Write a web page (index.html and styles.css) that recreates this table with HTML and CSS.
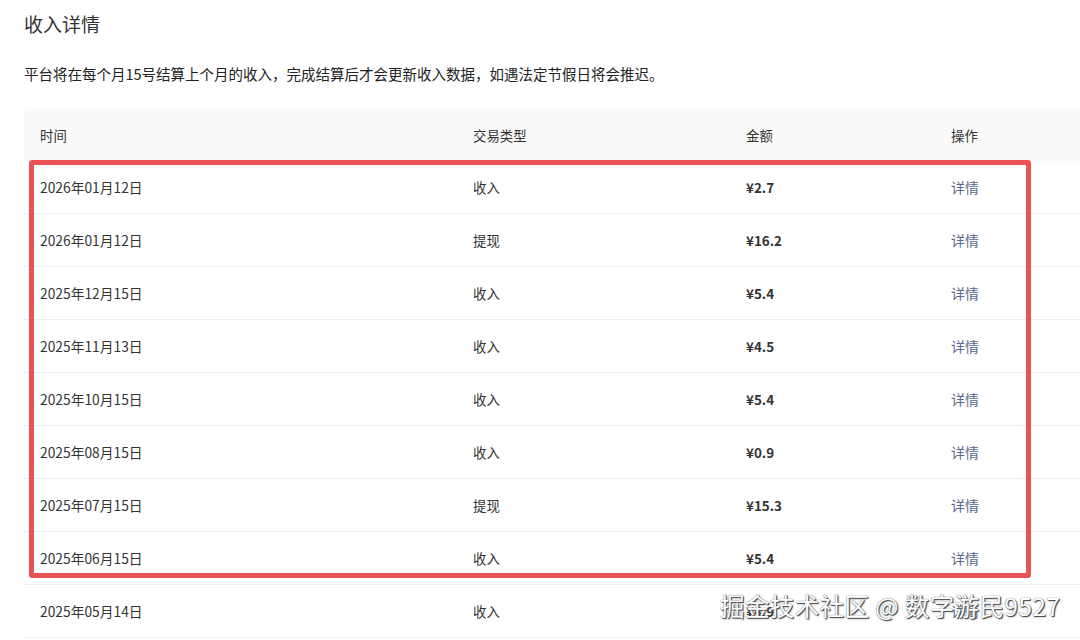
FILE: index.html
```html
<!DOCTYPE html>
<html lang="zh-CN">
<head>
<meta charset="utf-8">
<title>收入详情</title>
<link rel="stylesheet" href="styles.css">
</head>
<body>
<div class="page">
  <h1 class="title">收入详情</h1>
  <p class="desc">平台将在每个月15号结算上个月的收入，完成结算后才会更新收入数据，如遇法定节假日将会推迟。</p>
  <div class="table">
    <div class="row head">
      <div class="cell">时间</div>
      <div class="cell">交易类型</div>
      <div class="cell">金额</div>
      <div class="cell">操作</div>
    </div>
    <div class="row"><div class="cell">2026年01月12日</div><div class="cell">收入</div><div class="cell amount">¥2.7</div><div class="cell link">详情</div></div>
    <div class="row"><div class="cell">2026年01月12日</div><div class="cell">提现</div><div class="cell amount">¥16.2</div><div class="cell link">详情</div></div>
    <div class="row"><div class="cell">2025年12月15日</div><div class="cell">收入</div><div class="cell amount">¥5.4</div><div class="cell link">详情</div></div>
    <div class="row"><div class="cell">2025年11月13日</div><div class="cell">收入</div><div class="cell amount">¥4.5</div><div class="cell link">详情</div></div>
    <div class="row"><div class="cell">2025年10月15日</div><div class="cell">收入</div><div class="cell amount">¥5.4</div><div class="cell link">详情</div></div>
    <div class="row"><div class="cell">2025年08月15日</div><div class="cell">收入</div><div class="cell amount">¥0.9</div><div class="cell link">详情</div></div>
    <div class="row"><div class="cell">2025年07月15日</div><div class="cell">提现</div><div class="cell amount">¥15.3</div><div class="cell link">详情</div></div>
    <div class="row"><div class="cell">2025年06月15日</div><div class="cell">收入</div><div class="cell amount">¥5.4</div><div class="cell link">详情</div></div>
    <div class="row"><div class="cell">2025年05月14日</div><div class="cell">收入</div><div class="cell amount">¥4.9</div><div class="cell link">详情</div></div>
  </div>
</div>
<div class="highlight"></div>
<div class="watermark">掘金技术社区 @ 数字游民9527</div>
</body>
</html>
```

FILE: styles.css
```css
html, body {
  margin: 0;
  padding: 0;
  overflow: hidden;
  background: #fff;
}
body {
  font-family: "Noto Sans CJK SC", "Noto Sans", sans-serif;
  color: #333;
  position: relative;
  width: 1080px;
  height: 640px;
}
.page {
  padding: 12px 0 0 24px;
}
.title {
  margin: 0;
  font-size: 19px;
  line-height: 24px;
  font-weight: 400;
  color: #333;
}
.desc {
  margin: 28px 0 0;
  font-size: 14.5px;
  line-height: 20px;
  color: #222;
}
.table {
  margin-top: 24px;
  width: 1056px;
  font-size: 13.4px;
}
.row {
  display: grid;
  grid-template-columns: 433px 273px 205px 1fr;
  align-items: center;
  height: 53px;
  box-sizing: border-box;
  border-bottom: 1px solid #efefef;
}
.row.head {
  background: #fafafa;
  border-bottom: none;
  border-radius: 4px 0 0 0;
}
.cell {
  padding-left: 16px;
  line-height: 20px;
}
.row:not(.head) .cell:first-child {
  font-size: 13.8px;
}
.amount {
  font-weight: 600;
  color: #333;
}
.link {
  color: #5a6a8e;
  font-size: 14px;
}
.highlight {
  position: absolute;
  left: 29px;
  top: 160px;
  width: 1002px;
  height: 418px;
  box-sizing: border-box;
  border: 5px solid #ea5356;
  border-radius: 3px;
}
.watermark {
  position: absolute;
  left: 720px;
  top: 590px;
  font-size: 24.5px;
  line-height: 32px;
  color: #fff;
  letter-spacing: 0.4px;
  text-shadow: 1px 1px 0 #555, 0 0 1px #444, 1px 1px 2px #777;
}
```
